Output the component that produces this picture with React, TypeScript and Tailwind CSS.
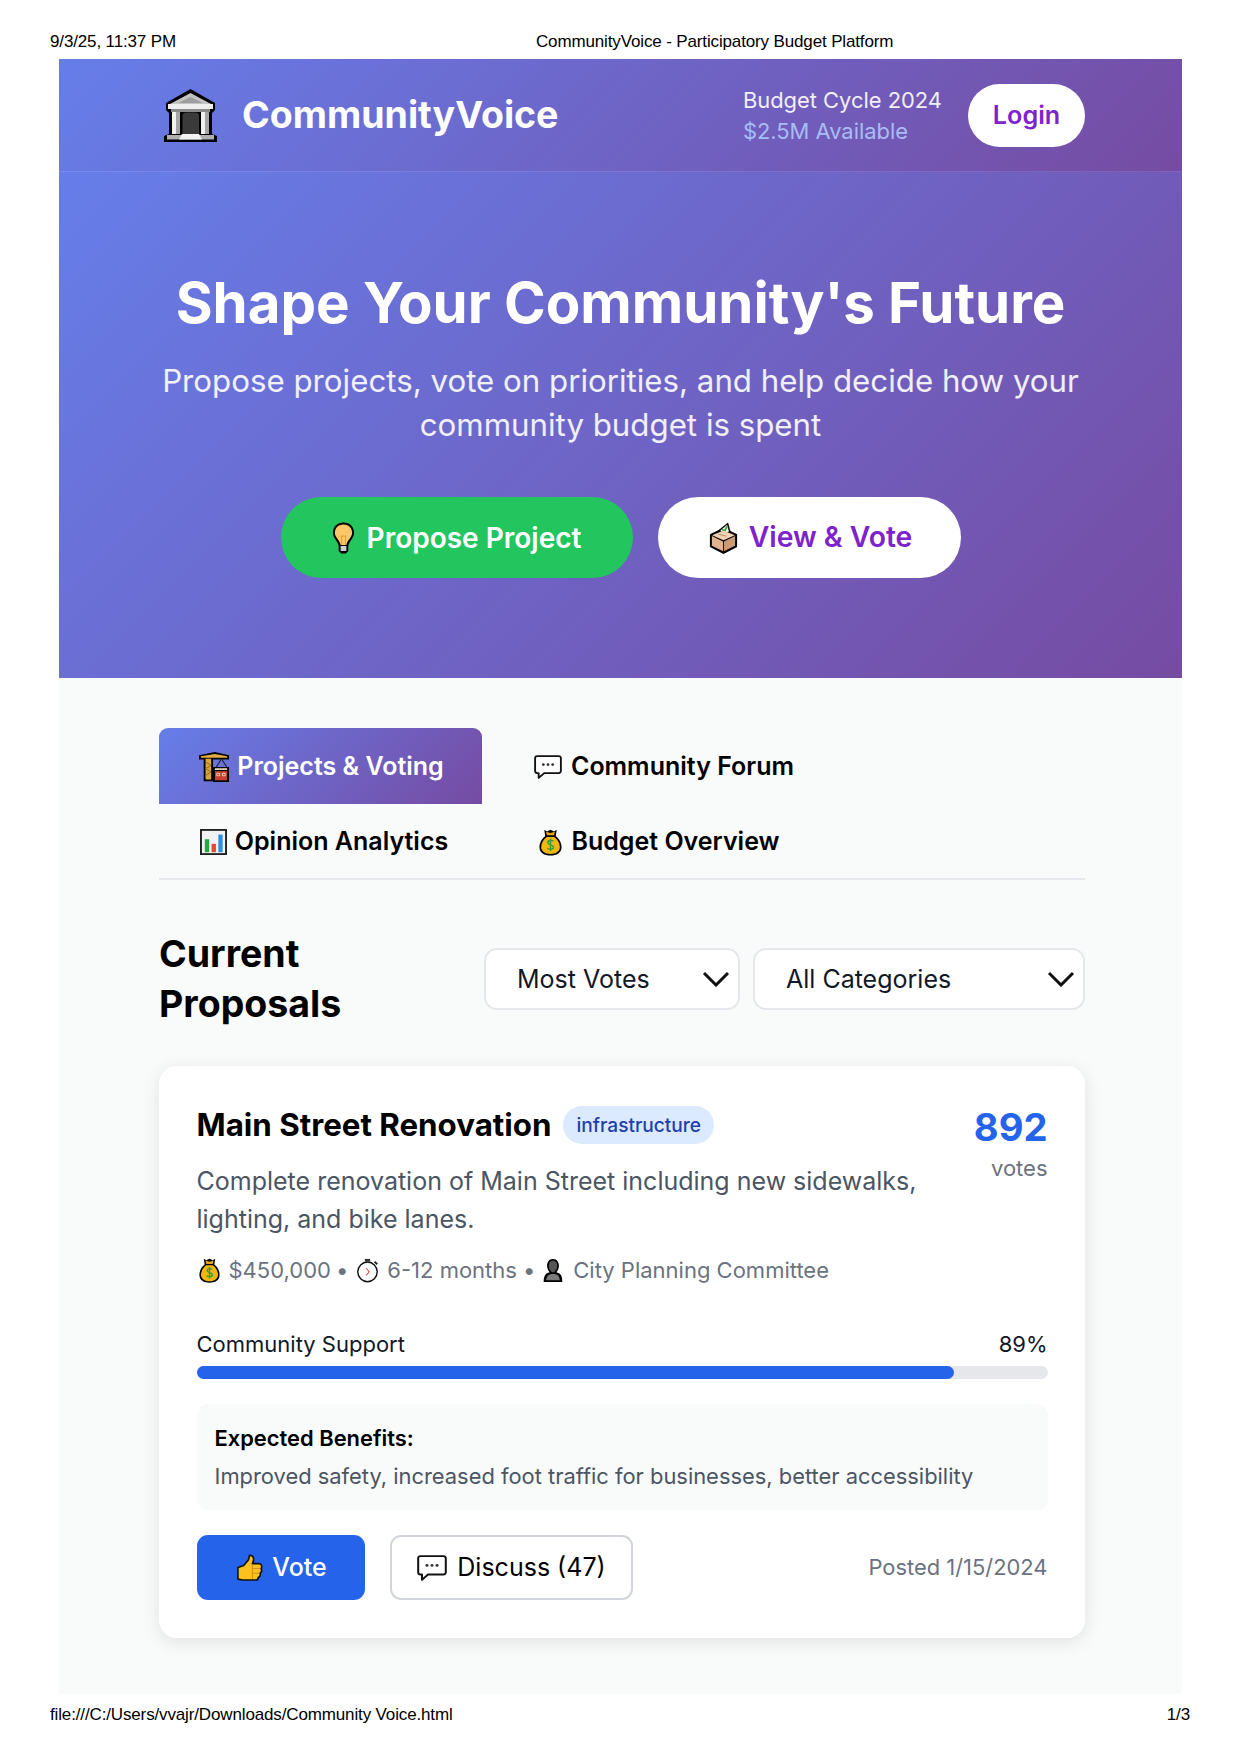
const heroGradient = 'bg-[linear-gradient(135deg,#667eea_0%,#764ba2_100%)]'

function BankIcon({ className }: { className?: string }) {
  return (
    <svg viewBox="0 0 53 53" preserveAspectRatio="none" className={className}>
      <path d="M26.5 0 L51 14 V21 L48 24 V45 L53 47 V53 H0 V47 L5 45 V24 L2 21 V14 Z" fill="#000" />
      <path d="M26.5 4 L47 15 H6 Z" fill="#c4c4c4" />
      <path d="M26.5 8 L39 14 H14 Z" fill="#9e9e9e" />
      <rect x="4" y="15" width="45" height="5" fill="#eeeeee" />
      <rect x="7" y="20" width="39" height="3" fill="#8a8a8a" />
      <rect x="8" y="23" width="4" height="22" fill="#f2f2f2" />
      <rect x="12" y="23" width="4" height="22" fill="#a6a6a6" />
      <rect x="37" y="23" width="4" height="22" fill="#f2f2f2" />
      <rect x="41" y="23" width="4" height="22" fill="#a6a6a6" />
      <path d="M18.5 45 V27 Q18.5 23.5 22 23.5 H31.5 Q35 23.5 35 27 V45 Z" fill="#3a3a3a" />
      <rect x="3" y="46" width="47" height="4.5" fill="#b0b0b0" />
      <path d="M15 50.5 L18 45 H35 L38 50.5 Z" fill="#f2f2f2" />
    </svg>
  )
}

function BulbIcon({ className }: { className?: string }) {
  return (
    <svg viewBox="0 0 24 32" preserveAspectRatio="none" className={className}>
      <path d="M12 0.5 C5 0.5 1 5 1 11 C1 16 6 19 7 24 V29 L9.5 31.5 H14.5 L17 29 V24 C18 19 23 16 23 11 C23 5 19 0.5 12 0.5 Z" fill="#000" />
      <path d="M12 2.5 C6 2.5 3 6.5 3 11 C3 15 8 18 9 23 H15 C16 18 21 15 21 11 C21 6.5 18 2.5 12 2.5 Z" fill="#fcc768" />
      <path d="M10 14 V23 M14 14 V23 M9 14 H15" stroke="#e0a030" strokeWidth="1" fill="none" />
      <rect x="9" y="24" width="6" height="5" fill="#d0d0d0" />
    </svg>
  )
}

function BallotIcon({ className }: { className?: string }) {
  return (
    <svg viewBox="0 0 32 34" preserveAspectRatio="none" className={className}>
      <path d="M16 6 L31 13 V26.5 L16 34 L1 26.5 V13 Z" fill="#000" />
      <path d="M10 9 L21 0.5 L24 11 L16 14 Z" fill="#000" />
      <path d="M12.5 9 L20 2.8 L22 10 L16 12 Z" fill="#f6f6f6" />
      <path d="M14.5 7.5 L17 10 L20 4.5" stroke="#35a63a" strokeWidth="2" fill="none" />
      <path d="M16 9 L28.5 14 L16 19.5 L3.5 14 Z" fill="#efd2b4" />
      <path d="M10 13 L19 15" stroke="#b98a60" strokeWidth="1" />
      <path d="M3.2 15 L15.5 20.7 V31 L3.2 25.3 Z" fill="#dfb48e" />
      <path d="M28.8 15 L16.5 20.7 V31 L28.8 25.3 Z" fill="#c99b72" />
    </svg>
  )
}

function CraneIcon({ className }: { className?: string }) {
  return (
    <svg viewBox="0 0 32 36" preserveAspectRatio="none" className={className}>
      <path d="M0 4 L17 0 L32 4 V9 H15 V35 H5 V9 H0 Z" fill="#000" />
      <path d="M2 5 L17 2.5 L30 5 V7 H2 Z" fill="#e3ac40" />
      <rect x="7" y="8" width="6" height="25" fill="#dba43c" />
      <path d="M7 12 L13 16 M13 16 L7 20 M7 20 L13 24 M13 24 L7 28" stroke="#8a6420" strokeWidth="1" fill="none" />
      <path d="M24 8 L18 19 M24 8 L30 19" stroke="#222" strokeWidth="1.2" fill="none" />
      <rect x="15" y="18" width="17" height="18" fill="#000" />
      <rect x="17" y="19.5" width="13" height="2" fill="#efe0cf" />
      <rect x="17" y="23" width="13" height="11" fill="#c8402f" />
      <path d="M19 25.5 H22 V28.5 H19 Z M25 25.5 H28 V28.5 H25 Z" stroke="#f1d9c8" strokeWidth="1" fill="none" />
    </svg>
  )
}

function SpeechIcon({ className }: { className?: string }) {
  return (
    <svg viewBox="0 0 30 27" preserveAspectRatio="none" className={className}>
      <path d="M3.5 1.2 H26.5 A2.3 2.3 0 0 1 28.8 3.5 V18 A2.3 2.3 0 0 1 26.5 20.3 H11 L5 25.8 V20.3 H3.5 A2.3 2.3 0 0 1 1.2 18 V3.5 A2.3 2.3 0 0 1 3.5 1.2 Z" fill="#fff" stroke="#111" strokeWidth="2" strokeLinejoin="round" />
      <circle cx="10" cy="10.8" r="1.5" fill="#333" />
      <circle cx="15" cy="10.8" r="1.5" fill="#333" />
      <circle cx="20" cy="10.8" r="1.5" fill="#333" />
    </svg>
  )
}

function ChartIcon({ className }: { className?: string }) {
  return (
    <svg viewBox="0 0 28 28" preserveAspectRatio="none" className={className}>
      <rect x="1" y="1" width="26" height="26" fill="#f2f2f2" stroke="#222" strokeWidth="2" />
      <rect x="5" y="11" width="4.5" height="14" fill="#27a844" />
      <rect x="12" y="16" width="4.5" height="9" fill="#e5482d" />
      <rect x="19" y="6" width="4.5" height="19" fill="#2f8fe0" />
    </svg>
  )
}

function BagIcon({ className }: { className?: string }) {
  return (
    <svg viewBox="0 0 26 34" preserveAspectRatio="none" className={className}>
      <path d="M6 1 L9 3 L13 1 L17 3 L20 1 L19 9 C24 13 25.5 19 25.5 23 C25.5 30 20 33.5 13 33.5 C6 33.5 0.5 30 0.5 23 C0.5 19 2 13 7 9 Z" fill="#000" />
      <path d="M8 3.5 L13 5 L18 3.5 L17 8 H9 Z" fill="#e8a317" />
      <path d="M9 10 H17 C21 13 23.5 18 23.5 23 C23.5 28 19 31.5 13 31.5 C7 31.5 2.5 28 2.5 23 C2.5 18 5 13 9 10 Z" fill="#f5b70d" />
      <path d="M16.5 15.5 C15 13.8 10 14 10 17 C10 20.5 16.5 19.5 16.5 23 C16.5 26 11 26 9.5 24 M13 12 V28" stroke="#2f9e3f" strokeWidth="1.7" fill="none" />
    </svg>
  )
}

function StopwatchIcon({ className }: { className?: string }) {
  return (
    <svg viewBox="0 0 26 28" preserveAspectRatio="none" className={className}>
      <rect x="10" y="1" width="6" height="3" fill="#333" />
      <path d="M21 4 L24 7" stroke="#222" strokeWidth="2.2" />
      <circle cx="13" cy="15.5" r="11" fill="#fff" stroke="#111" strokeWidth="1.6" />
      <path d="M11.5 11.5 L15 15.5 L11.5 19.5" stroke="#d9534f" strokeWidth="1.2" fill="none" />
    </svg>
  )
}

function BustIcon({ className }: { className?: string }) {
  return (
    <svg viewBox="0 0 26 28" preserveAspectRatio="none" className={className}>
      <path d="M13 1 C8 1 6 5 6 9 C6 12 8 15 9 16 C4 17 2 20 2 27 H24 C24 20 22 17 17 16 C18 15 20 12 20 9 C20 5 18 1 13 1 Z" fill="#000" />
      <path d="M13 3 C9 3 8 6 8 9 C8 13 11 16 13 16 C15 16 18 13 18 9 C18 6 17 3 13 3 Z" fill="#555" />
      <path d="M5 25 C5 21 7 19 11 18 H15 C19 19 21 21 21 25 Z" fill="#7a7a7a" />
    </svg>
  )
}

function ThumbIcon({ className }: { className?: string }) {
  return (
    <svg viewBox="0 0 28 28" preserveAspectRatio="none" className={className}>
      <path d="M2 14 L8 12 L13 6 L14 1.5 C17 1 19 4 18 7 L17 10 H24 C27 10 27 14 26 15 C27 17 26.5 19 25 20 C25.5 22 24.5 24 23 24.5 C23 26 22 27 20 27 H7 L2 26 Z" fill="#fcc21b" stroke="#111" strokeWidth="1.7" strokeLinejoin="round" />
      <path d="M17 15 H25 M17 20 H24 M17 11 V26" stroke="#d8921a" strokeWidth="1.2" fill="none" />
    </svg>
  )
}

function Chevron() {
  return (
    <svg viewBox="0 0 28 16" className="h-[16px] w-[28px]">
      <path d="M2 2 L14 14 L26 2" fill="none" stroke="#111" strokeWidth="3" />
    </svg>
  )
}

function Select({ label, className }: { label: string; className: string }) {
  return (
    <div className={`flex h-[62px] items-center justify-between rounded-[13px] border-2 border-[#e5e7eb] bg-white pl-[31px] pr-[8px] text-[25px] text-[#111827] ${className}`}>
      <span className="pt-[2px]">{label}</span>
      <Chevron />
    </div>
  )
}

export default function App() {
  return (
    <div className="flex h-[1754px] flex-col bg-white font-['Inter',sans-serif] text-black">
      <div className="flex h-[59px] items-start px-[50px] pt-[32px] font-['Liberation_Sans',Arial,sans-serif] text-[17px] leading-[20px] tracking-[-0.14px]">
        <span>9/3/25, 11:37 PM</span>
        <span className="ml-[360px]">CommunityVoice - Participatory Budget Platform</span>
      </div>

      <div className="mx-[59px] flex h-[1635px] w-[1123px] flex-col bg-[#f9fafa]">
        <header className={`flex h-[113px] items-center justify-between border-b border-white/10 pl-[105px] pr-[97px] ${heroGradient}`}>
          <div className="flex items-center gap-[25px]">
            <BankIcon className="h-[53px] w-[53px]" />
            <span className="text-[37.5px] font-bold text-white">CommunityVoice</span>
          </div>
          <div className="flex items-center gap-[26px]">
            <div className="pt-[2px] text-[21.9px] leading-[31px]">
              <div className="text-white/90">Budget Cycle 2024</div>
              <div className="text-[#a9bdf5]">$2.5M Available</div>
            </div>
            <div className="flex h-[63px] w-[117px] items-center justify-center rounded-full bg-white pt-[2px] text-[25.2px] font-semibold text-[#7e22ce]">Login</div>
          </div>
        </header>

        <section className={`flex h-[506px] flex-col items-center ${heroGradient} pt-[95px] text-white`}>
          <h1 className="text-[56.4px] font-bold leading-[72px]">Shape Your Community's Future</h1>
          <p className="mt-[20px] w-[960px] text-center text-[31.25px] leading-[44px] text-white/90">
            Propose projects, vote on priorities, and help decide how your community budget is spent
          </p>
          <div className="mt-[50px] flex gap-[25px]">
            <div className="flex h-[81px] w-[352px] items-center justify-center gap-[12px] rounded-full bg-[#22c55e] text-[28px] font-semibold">
              <BulbIcon className="h-[32px] w-[23px]" />
              <span>Propose Project</span>
            </div>
            <div className="flex h-[81px] w-[303px] items-center justify-center gap-[11px] rounded-full bg-white pl-[3px] text-[28.3px] font-semibold text-[#7e22ce]">
              <BallotIcon className="h-[32px] w-[29px]" />
              <span>View &amp; Vote</span>
            </div>
          </div>
        </section>

        <main className="pl-[100px] pr-[97px] pt-[50px]">
          <nav className="grid w-[926px] grid-cols-[323px_358px] border-b-2 border-[#e5e7eb] text-[25px] font-semibold">
            <div className={`flex h-[76px] items-center justify-center gap-[8px] rounded-t-[9px] pl-[2px] pt-[2px] text-white ${heroGradient}`}>
              <CraneIcon className="h-[30px] w-[30px]" />
              <span>Projects &amp; Voting</span>
            </div>
            <div className="flex h-[76px] items-center justify-center gap-[9px] pl-[6px] pt-[2px]">
              <SpeechIcon className="h-[24px] w-[28px]" />
              <span>Community Forum</span>
            </div>
            <div className="flex h-[74px] items-center justify-center gap-[8px] pl-[7px] pt-[2px]">
              <ChartIcon className="h-[26px] w-[27px]" />
              <span>Opinion Analytics</span>
            </div>
            <div className="flex h-[74px] items-center justify-center gap-[9px] pr-[3px] pt-[2px]">
              <BagIcon className="h-[27px] w-[23px]" />
              <span>Budget Overview</span>
            </div>
          </nav>

          <div className="mt-[49px] flex items-center">
            <h2 className="w-[325px] text-[37.5px] font-bold leading-[50px]">Current<br />Proposals</h2>
            <div className="flex gap-[13px]">
              <Select label="Most Votes" className="w-[256px]" />
              <Select label="All Categories" className="w-[332px]" />
            </div>
          </div>

          <article className="mt-[37px] rounded-[18px] bg-white px-[37.5px] pb-[38px] pt-[37px] shadow-[0_4px_18px_rgba(0,0,0,0.1)]">
            <div className="flex justify-between">
              <div>
                <div className="flex items-center gap-[12px]">
                  <h3 className="text-[31.3px] font-bold leading-[44px]">Main Street Renovation</h3>
                  <span className="flex h-[38px] items-center rounded-full bg-[#dbeafe] px-[13px] text-[19.1px] font-medium text-[#1e40af]">infrastructure</span>
                </div>
                <p className="mt-[15px] w-[760px] text-[25px] leading-[38px] text-[#4b5563]">
                  Complete renovation of Main Street including new sidewalks, lighting, and bike lanes.
                </p>
              </div>
              <div className="text-right">
                <div className="text-[38.2px] font-bold leading-[48px] text-[#2563eb]">892</div>
                <div className="mt-[2px] text-[22px] leading-[30px] text-[#6b7280]">votes</div>
              </div>
            </div>

            <div className="mt-[14px] flex items-center text-[22px] leading-[36px] text-[#6b7280]">
              <BagIcon className="ml-[2px] mr-[9px] h-[25px] w-[21px]" />
              <span>$450,000</span>
              <span className="ml-[5px] mr-[8px]">•</span>
              <StopwatchIcon className="mr-[8px] h-[25px] w-[23px]" />
              <span>6-12 months</span>
              <span className="ml-[6px] mr-[7px]">•</span>
              <BustIcon className="mr-[9px] h-[25px] w-[22px]" />
              <span>City Planning Committee</span>
            </div>

            <div className="mt-[40px] flex justify-between text-[22px] leading-[32px] text-[#111827]">
              <span>Community Support</span>
              <span>89%</span>
            </div>
            <div className="mt-[6px] h-[13px] w-full rounded-full bg-[#e5e7eb]">
              <div className="h-full rounded-full bg-[#2563eb]" style={{ width: '89%' }} />
            </div>

            <div className="mt-[25px] h-[106px] rounded-[11px] bg-[#f9fafa] px-[18px] pt-[18px]">
              <div className="text-[21.9px] font-semibold leading-[32px]">Expected Benefits:</div>
              <div className="mt-[6px] text-[21.9px] leading-[32px] text-[#4b5563]">
                Improved safety, increased foot traffic for businesses, better accessibility
              </div>
            </div>

            <div className="mt-[25px] flex items-center">
              <div className="flex h-[65px] w-[168px] items-center justify-center gap-[9px] rounded-[11px] bg-[#2563eb] pl-[2px] text-[25px] font-medium text-white">
                <ThumbIcon className="h-[27px] w-[27px]" />
                <span>Vote</span>
              </div>
              <div className="ml-[25px] flex h-[65px] w-[243px] items-center justify-center gap-[10px] rounded-[11px] border-2 border-[#d1d5db] bg-white pl-[1px] text-[25px]">
                <SpeechIcon className="h-[26px] w-[30px]" />
                <span>Discuss (47)</span>
              </div>
              <span className="ml-auto text-[21.9px] text-[#6b7280]">Posted 1/15/2024</span>
            </div>
          </article>
        </main>
      </div>

      <div className="flex justify-between px-[50px] pt-[11px] font-['Liberation_Sans',Arial,sans-serif] text-[17px] leading-[20px] tracking-[-0.14px]">
        <span>file:///C:/Users/vvajr/Downloads/Community Voice.html</span>
        <span>1/3</span>
      </div>
    </div>
  )
}
